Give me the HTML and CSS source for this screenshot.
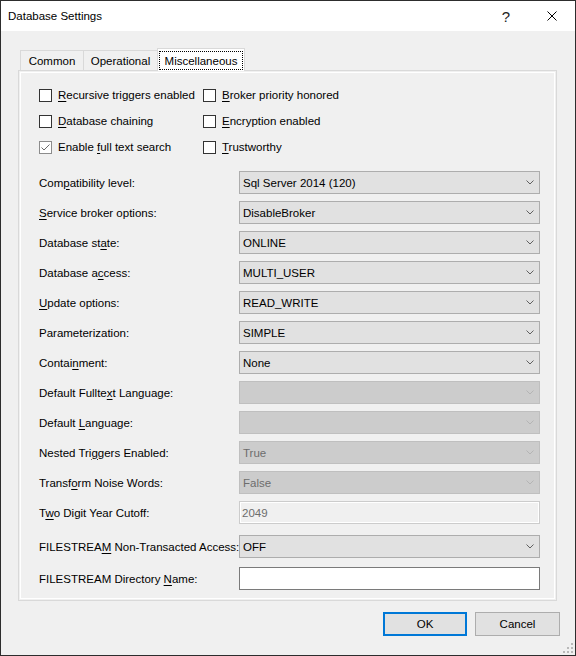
FILE: index.html
```html
<!DOCTYPE html>
<html>
<head>
<meta charset="utf-8">
<title>Database Settings</title>
<link rel="stylesheet" href="styles.css">
</head>
<body>
<div class="window">
  <div class="titlebar">
    <span class="title">Database Settings</span>
    <span class="capbtn help">?</span>
    <span class="capbtn close"><svg width="10" height="10" viewBox="0 0 10 10"><path d="M0.5 0.5 L9.5 9.5 M9.5 0.5 L0.5 9.5" stroke="#000" stroke-width="1" fill="none"/></svg></span>
  </div>
  <div class="content">
    <div class="tabs">
      <div class="tab t-common">Common</div>
      <div class="tab t-oper">Operational</div>
      <div class="tab t-misc sel"><span class="focus">Miscellaneous</span></div>
    </div>
    <div class="panel">
      <div class="checks">
        <label class="chk"><span class="box"></span><span><u>R</u>ecursive triggers enabled</span></label>
        <label class="chk"><span class="box"></span><span><u>B</u>roker priority honored</span></label>
        <label class="chk"><span class="box"></span><span><u>D</u>atabase chaining</span></label>
        <label class="chk"><span class="box"></span><span><u>E</u>ncryption enabled</span></label>
        <label class="chk"><span class="box checked"><svg width="11" height="11" viewBox="0 0 11 11"><path d="M1.5 5.5 L4 8 L9.5 2.5" stroke="#6b6b6b" stroke-width="1" fill="none"/></svg></span><span>Enable <u>f</u>ull text search</span></label>
        <label class="chk"><span class="box"></span><span><u>T</u>rustworthy</span></label>
      </div>
      <div class="form">
        <div class="row"><span class="lbl">Com<u>p</u>atibility level:</span><div class="combo"><span>Sql Server 2014 (120)</span><svg class="chev" width="8" height="5" viewBox="0 0 8 5"><path d="M0.5 0.5 L4 4 L7.5 0.5" stroke="#606060" fill="none"/></svg></div></div>
        <div class="row"><span class="lbl"><u>S</u>ervice broker options:</span><div class="combo"><span>DisableBroker</span><svg class="chev" width="8" height="5" viewBox="0 0 8 5"><path d="M0.5 0.5 L4 4 L7.5 0.5" stroke="#606060" fill="none"/></svg></div></div>
        <div class="row"><span class="lbl">Database st<u>a</u>te:</span><div class="combo"><span>ONLINE</span><svg class="chev" width="8" height="5" viewBox="0 0 8 5"><path d="M0.5 0.5 L4 4 L7.5 0.5" stroke="#606060" fill="none"/></svg></div></div>
        <div class="row"><span class="lbl">Database a<u>c</u>cess:</span><div class="combo"><span>MULTI_USER</span><svg class="chev" width="8" height="5" viewBox="0 0 8 5"><path d="M0.5 0.5 L4 4 L7.5 0.5" stroke="#606060" fill="none"/></svg></div></div>
        <div class="row"><span class="lbl"><u>U</u>pdate options:</span><div class="combo"><span>READ_WRITE</span><svg class="chev" width="8" height="5" viewBox="0 0 8 5"><path d="M0.5 0.5 L4 4 L7.5 0.5" stroke="#606060" fill="none"/></svg></div></div>
        <div class="row"><span class="lbl">Parameterization:</span><div class="combo"><span>SIMPLE</span><svg class="chev" width="8" height="5" viewBox="0 0 8 5"><path d="M0.5 0.5 L4 4 L7.5 0.5" stroke="#606060" fill="none"/></svg></div></div>
        <div class="row"><span class="lbl">Contai<u>n</u>ment:</span><div class="combo"><span>None</span><svg class="chev" width="8" height="5" viewBox="0 0 8 5"><path d="M0.5 0.5 L4 4 L7.5 0.5" stroke="#606060" fill="none"/></svg></div></div>
        <div class="row"><span class="lbl">Default Fullte<u>x</u>t Language:</span><div class="combo dis"><span></span><svg class="chev" width="8" height="5" viewBox="0 0 8 5"><path d="M0.5 0.5 L4 4 L7.5 0.5" stroke="#b4b4b4" fill="none"/></svg></div></div>
        <div class="row"><span class="lbl">Default <u>L</u>anguage:</span><div class="combo dis"><span></span><svg class="chev" width="8" height="5" viewBox="0 0 8 5"><path d="M0.5 0.5 L4 4 L7.5 0.5" stroke="#b4b4b4" fill="none"/></svg></div></div>
        <div class="row"><span class="lbl">Nested Tri<u>g</u>gers Enabled:</span><div class="combo dis"><span>True</span><svg class="chev" width="8" height="5" viewBox="0 0 8 5"><path d="M0.5 0.5 L4 4 L7.5 0.5" stroke="#b4b4b4" fill="none"/></svg></div></div>
        <div class="row"><span class="lbl">Transf<u>o</u>rm Noise Words:</span><div class="combo dis"><span>False</span><svg class="chev" width="8" height="5" viewBox="0 0 8 5"><path d="M0.5 0.5 L4 4 L7.5 0.5" stroke="#b4b4b4" fill="none"/></svg></div></div>
        <div class="row"><span class="lbl">T<u>w</u>o Digit Year Cutoff:</span><div class="text dis">2049</div></div>
        <div class="row fs1"><span class="lbl">FILESTREA<u>M</u> Non-Transacted Access:</span><div class="combo"><span>OFF</span><svg class="chev" width="8" height="5" viewBox="0 0 8 5"><path d="M0.5 0.5 L4 4 L7.5 0.5" stroke="#606060" fill="none"/></svg></div></div>
        <div class="row fs2"><span class="lbl">FILESTREAM Directory <u>N</u>ame:</span><div class="text"></div></div>
      </div>
    </div>
  </div>
  <div class="buttons">
    <div class="btn ok">OK</div>
    <div class="btn cancel">Cancel</div>
  </div>
  <svg class="grip" width="10" height="10" viewBox="0 0 10 10">
    <rect x="8" y="0" width="2" height="2" fill="#b9b9b9"/>
    <rect x="4" y="4" width="2" height="2" fill="#b9b9b9"/>
    <rect x="8" y="4" width="2" height="2" fill="#b9b9b9"/>
    <rect x="0" y="8" width="2" height="2" fill="#b9b9b9"/>
    <rect x="4" y="8" width="2" height="2" fill="#b9b9b9"/>
    <rect x="8" y="8" width="2" height="2" fill="#b9b9b9"/>
  </svg>
</div>
</body>
</html>
```

FILE: styles.css
```css
* { box-sizing: border-box; }
html, body { margin: 0; padding: 0; }
body {
  width: 576px;
  height: 656px;
  overflow: hidden;
  font-family: "Liberation Sans", Arial, sans-serif;
  font-size: 11.5px;
  color: #000;
  background: #f0f0f0;
}
u { text-decoration: underline; text-underline-offset: 2px; }
.window {
  position: relative;
  width: 576px;
  height: 656px;
  border: 1px solid #2d2d2d;
  background: #f0f0f0;
  display: flex;
  flex-direction: column;
}
.titlebar {
  height: 30px;
  background: #fff;
  display: flex;
  align-items: center;
}
.title { flex: 1; padding-left: 7px; line-height: 30px; }
.capbtn {
  width: 46px;
  height: 30px;
  display: flex;
  align-items: center;
  justify-content: center;
}
.help { font-size: 15px; color: #222; }
.content { padding: 17px 18px 0 17px; }
.tabs {
  display: flex;
  align-items: flex-end;
  height: 23px;
  margin-bottom: -1px;
  padding-left: 2px;
  position: relative;
  z-index: 1;
}
.tab {
  height: 20px;
  margin-bottom: 1px;
  border: 1px solid #d9d9d9;
  border-bottom: none;
  background: #f0f0f0;
  display: flex;
  align-items: center;
  justify-content: center;
  padding-top: 1px;
}
.t-common { width: 64px; }
.t-oper { width: 75px; margin-left: -1px; }
.t-misc { width: 88px; margin-left: -1px; }
.tab.sel {
  height: 23px;
  margin-bottom: 0;
  background: #fff;
  padding: 2px 1px 1px 1px;
}
.focus {
  flex: 1;
  align-self: stretch;
  border: 1px dotted #000;
  display: flex;
  align-items: center;
  justify-content: center;
}
.panel {
  height: 531px;
  border: 1px solid #d9d9d9;
  background: #f0f0f0;
  box-shadow: inset 0 0 0 1px #f0f0f0, inset 0 0 0 2px #fff;
  padding: 11px 15px 0 20px;
}
.checks {
  display: grid;
  grid-template-columns: 164px auto;
  grid-auto-rows: 26px;
}
.chk {
  display: flex;
  align-items: center;
  gap: 6px;
  white-space: nowrap;
}
.box {
  width: 13px;
  height: 13px;
  flex: none;
  border: 1px solid #333;
  background: #fff;
  display: flex;
  align-items: center;
  justify-content: center;
}
.box.checked { border-color: #8c8c8c; }
.form {
  margin-top: 11px;
  display: flex;
  flex-direction: column;
  gap: 7px;
}
.row {
  display: grid;
  grid-template-columns: 200px 301px;
  align-items: center;
  height: 23px;
}
.lbl { white-space: nowrap; }
.combo {
  height: 23px;
  border: 1px solid #adadad;
  background: #e1e1e1;
  display: flex;
  align-items: center;
  justify-content: space-between;
  padding: 0 5px 0 3px;
}
.combo.dis { background: #cccccc; border-color: #bfbfbf; color: #6d6d6d; }
.chev { flex: none; }
.text {
  height: 23px;
  border: 1px solid #7a7a7a;
  background: #fff;
}
.text.dis {
  border-color: #cccccc;
  background: #f0f0f0;
  box-shadow: inset 0 0 0 1px #fff;
  color: #6d6d6d;
  padding-left: 2px;
  display: flex;
  align-items: center;
}
.fs1 { margin-top: 4px; }
.fs2 { margin-top: 2px; }
.buttons {
  display: flex;
  justify-content: flex-end;
  gap: 8px;
  margin-top: 11px;
  padding-right: 15px;
}
.btn {
  width: 85px;
  height: 24px;
  border: 1px solid #adadad;
  background: #e1e1e1;
  display: flex;
  align-items: center;
  justify-content: center;
}
.btn.ok { width: 84px; border: 2px solid #0078d7; }
.grip { position: absolute; right: 2px; bottom: 2px; }
```
